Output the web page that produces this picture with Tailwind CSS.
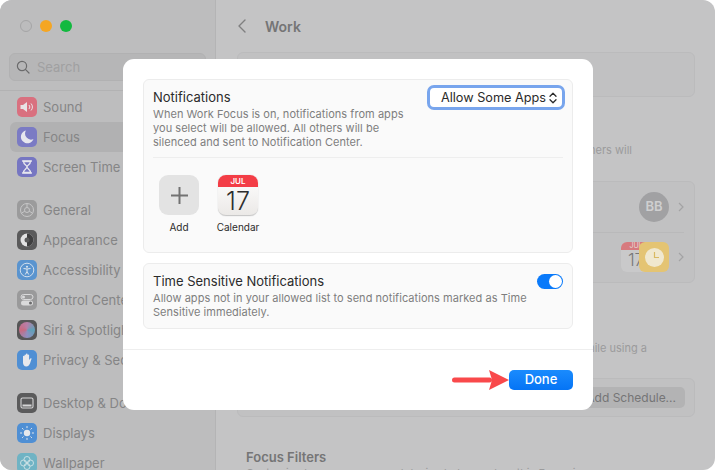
<!DOCTYPE html>
<html>
  <head>
    <meta charset="utf-8">
    <script src="https://cdn.jsdelivr.net/npm/@tailwindcss/browser@4"></script>
    <title>Work Focus</title>
  </head>
  <body class="bg-white font-['Inter','Liberation_Sans',sans-serif] overflow-hidden">
    <div class="relative flex w-[715px] h-[470px] rounded-[12px] overflow-hidden bg-[#c4c4c5]">

      <!-- sidebar -->
      <aside class="w-[216px] h-full shrink-0 bg-[#bdbdbe] border-r border-[#b4b4b5] overflow-hidden">
        <div class="flex gap-2 pl-[20px] pt-[20px] h-[53px]">
          <span class="w-3 h-3 rounded-full border border-[#a5a5a6] bg-[#bcbcbd]"></span>
          <span class="w-3 h-3 rounded-full bg-[#f5a623]"></span>
          <span class="w-3 h-3 rounded-full bg-[#12b93f]"></span>
        </div>
        <div class="mx-[9px] h-[28px] rounded-[6px] bg-[#b6b6b7] border border-[#b1b1b2] flex items-center pl-[6px] gap-[7px]">
          <svg class="w-[14px] h-[14px]" viewBox="0 0 14 14" fill="none" stroke="#6b6b6c" stroke-width="1.2"><circle cx="6" cy="6" r="4.6"/><path d="M9.4 9.4 13 13" stroke-linecap="round"/></svg>
          <span class="text-[13px] text-[#a0a0a1] pt-px">Search</span>
        </div>
        <div class="mt-[9px] h-px bg-[#b2b2b3]"></div>
        <nav class="mt-px text-[13px] text-[#858586] whitespace-nowrap [&>div>span:last-child]:pt-px">
          <div class="flex items-center h-[30px] pl-[17px] gap-[6px]">
            <span class="w-5 h-5 rounded-[5px] bg-[#d9707f] flex items-center justify-center">
              <svg class="w-4 h-4" viewBox="0 0 16 16" fill="none"><path d="M1.5 6h2.5l4-3v10l-4-3H1.5z" fill="#e8e3e5"/><path d="M10 6a3 3 0 0 1 0 4M12 4.5a5 5 0 0 1 0 7" stroke="#e8e3e5" stroke-width="1"/></svg>
            </span>
            <span>Sound</span>
          </div>
          <div class="flex items-center h-[30px] ml-[10px] pl-[7px] gap-[6px] rounded-l-[6px] bg-[#b1b1b2]">
            <span class="w-5 h-5 rounded-[5px] bg-[#7b7bc4] flex items-center justify-center">
              <svg class="w-4 h-4" viewBox="0 0 16 16"><path d="M7 1.5a6.5 6.5 0 1 0 7.5 8.6A6 6 0 0 1 7 1.5z" fill="#e6e6ee"/></svg>
            </span>
            <span>Focus</span>
          </div>
          <div class="flex items-center h-[30px] pl-[17px] gap-[6px]">
            <span class="w-5 h-5 rounded-[5px] bg-[#7676c2] flex items-center justify-center">
              <svg class="w-4 h-4" viewBox="0 0 16 16" fill="none" stroke="#e6e6ee" stroke-width="1.3"><path d="M3.5 2h9M3.5 14h9" stroke-linecap="round"/><path d="M4.5 2.5c0 3 3.5 3.8 3.5 5.5s-3.5 2.5-3.5 5.5h7c0-3-3.500-3.800-3.500-5.500s3.500-2.500 3.500-5.500z"/></svg>
            </span>
            <span>Screen Time</span>
          </div>

          <div class="h-[13px]"></div>

          <div class="flex items-center h-[30px] pl-[17px] gap-[6px]">
            <span class="w-5 h-5 rounded-[5px] bg-[#9b9b9c] flex items-center justify-center">
              <svg class="w-4 h-4" viewBox="0 0 16 16" fill="none" stroke="#c6c6c7" stroke-width="1"><circle cx="8" cy="8" r="6.500"/><circle cx="8" cy="8" r="2.500"/><path d="M8 1.500v4M2.400 11.200l3.400-2M13.600 11.200l-3.400-2"/></svg>
            </span>
            <span>General</span>
          </div>
          <div class="flex items-center h-[30px] pl-[17px] gap-[6px]">
            <span class="w-5 h-5 rounded-[5px] bg-[#5a5a5b] flex items-center justify-center">
              <svg class="w-4 h-4" viewBox="0 0 16 16"><circle cx="8" cy="8" r="6.500" fill="#e2e2e3"/><path d="M8 1.500a6.500 6.500 0 0 1 0 13z" fill="#3f3f40"/><circle cx="8" cy="8" r="2.500" fill="#5a5a5b"/></svg>
            </span>
            <span>Appearance</span>
          </div>
          <div class="flex items-center h-[30px] pl-[17px] gap-[6px]">
            <span class="w-5 h-5 rounded-[5px] bg-[#5a94cf] flex items-center justify-center">
              <svg class="w-4 h-4" viewBox="0 0 16 16" fill="none" stroke="#dfe7ef"><circle cx="8" cy="8" r="6.800" stroke-width="0.900"/><circle cx="8" cy="4.700" r="1" fill="#dfe7ef" stroke="none"/><path d="M4.500 6.500 8 7l3.500-.5M8 7v2.500M8 9.500 6.300 12.500M8 9.500l1.700 3" stroke-width="1"/></svg>
            </span>
            <span>Accessibility</span>
          </div>
          <div class="flex items-center h-[30px] pl-[17px] gap-[6px]">
            <span class="w-5 h-5 rounded-[5px] bg-[#9a9a9b] flex items-center justify-center">
              <svg class="w-4 h-4" viewBox="0 0 16 16"><rect x="2" y="2.500" width="12" height="5" rx="2.500" fill="none" stroke="#dadadb"/><circle cx="4.500" cy="5" r="1.500" fill="#dadadb"/><rect x="2" y="8.500" width="12" height="5" rx="2.500" fill="#dadadb"/><circle cx="11.500" cy="11" r="1.500" fill="#6b6b6c"/></svg>
            </span>
            <span>Control Center</span>
          </div>
          <div class="flex items-center h-[30px] pl-[17px] gap-[6px]">
            <span class="w-5 h-5 rounded-[5px] bg-[#565657] flex items-center justify-center">
              <span class="w-4 h-4 rounded-full bg-[conic-gradient(#b77fa8,#5fa0b8,#8f8fc0,#c86a80,#b77fa8)]"></span>
            </span>
            <span>Siri &amp; Spotlight</span>
          </div>
          <div class="flex items-center h-[30px] pl-[17px] gap-[6px]">
            <span class="w-5 h-5 rounded-[5px] bg-[#4f8fd4] flex items-center justify-center">
              <svg class="w-4 h-4" viewBox="0 0 16 16" fill="#e6e8ec"><path d="M4 7V4.200a.800.800 0 0 1 1.500 0V3a.800.800 0 0 1 1.500 0V2.300a.800.800 0 0 1 1.600 0V3a.800.800 0 0 1 1.500 0v5l1.300-1.500c.7-.6 1.500.1 1 .8L11 11.500C10 13.500 9 14.500 7.500 14.500 5 14.500 4 12.800 4 10.500z"/></svg>
            </span>
            <span>Privacy &amp; Security</span>
          </div>

          <div class="h-[13px]"></div>

          <div class="flex items-center h-[30px] pl-[17px] gap-[6px]">
            <span class="w-5 h-5 rounded-[5px] bg-[#5b5b5c] flex items-center justify-center">
              <svg class="w-4 h-4" viewBox="0 0 16 16" fill="none"><rect x="2" y="3" width="12" height="10" rx="1.500" stroke="#d5d5d6" stroke-width="1.100"/><rect x="3.500" y="9.500" width="9" height="2" fill="#d5d5d6"/></svg>
            </span>
            <span>Desktop &amp; Dock</span>
          </div>
          <div class="flex items-center h-[30px] pl-[17px] gap-[6px]">
            <span class="w-5 h-5 rounded-[5px] bg-[#4f8fd4] flex items-center justify-center">
              <svg class="w-4 h-4" viewBox="0 0 16 16" fill="none" stroke="#e6e8ec" stroke-linecap="round"><circle cx="8" cy="8" r="3.200" fill="#e6e8ec" stroke="none"/><path d="M8 1.500v1.200M8 13.300v1.200M1.500 8h1.200M13.300 8h1.200M3.400 3.400l.8.8M11.800 11.800l.8.8M3.400 12.600l.8-.8M11.800 4.200l.8-.8"/></svg>
            </span>
            <span>Displays</span>
          </div>
          <div class="flex items-center h-[30px] pl-[17px] gap-[6px]">
            <span class="w-5 h-5 rounded-[5px] bg-[#6fb3c4] flex items-center justify-center">
              <svg class="w-4 h-4" viewBox="0 0 16 16" fill="none" stroke="#cfe3e6" stroke-width="0.900"><circle cx="8" cy="4.500" r="3"/><circle cx="8" cy="11.500" r="3"/><circle cx="4.500" cy="8" r="3"/><circle cx="11.500" cy="8" r="3"/></svg>
            </span>
            <span>Wallpaper</span>
          </div>
        </nav>
      </aside>

      <!-- main pane behind the sheet -->
      <main class="flex-1 min-w-0 pl-[21px] pr-[20px] text-[11px] text-[#9b9b9c] whitespace-nowrap">
        <header class="flex items-center h-[52px] pl-[1px] gap-[19px]">
          <svg class="w-[8px] h-[14px]" viewBox="0 0 8 14" fill="none" stroke="#7f7f80" stroke-width="1.400" stroke-linecap="round" stroke-linejoin="round"><path d="M7 1 1 7l6 6"/></svg>
          <h1 class="text-[14px] font-semibold text-[#757576]">Work</h1>
        </header>
        <div class="h-[45px] rounded-[6px] bg-[#c1c1c2] border border-[#bbbbbc]"></div>
        <div class="h-[84px] flex items-center justify-end pr-[63px] pt-[23px]">
          <p>Allow notifications from selected people and apps. All others will</p>
        </div>
        <div class="h-[102px] rounded-[6px] bg-[#c1c1c2] border border-[#bbbbbc] flex flex-col">
          <div class="h-[50px] flex items-center justify-end gap-[9px] pr-[10px]">
            <span class="w-[30px] h-[30px] rounded-full bg-[#a1a1a3] text-[#cfcfd0] text-[13px] font-semibold flex items-center justify-center">BB</span>
            <svg class="w-[6px] h-[10px]" viewBox="0 0 6 10" fill="none" stroke="#a3a3a4" stroke-width="1.200"><path d="m1 1 4 4-4 4"/></svg>
          </div>
          <div class="h-px bg-[#b9b9ba] ml-[10px] mr-[10px]"></div>
          <div class="h-[50px] flex items-center justify-end gap-[9px] pr-[10px]">
            <span class="relative w-[48px] h-[30px]">
              <span class="absolute left-0 top-0 w-[30px] h-[30px] rounded-[6px] bg-[#c9c9ca] overflow-hidden text-center">
                <span class="block h-[8px] bg-[#d77a7e] text-[7px] leading-[8px] text-[#e3d5d5]">JUL</span>
                <span class="block text-[17px] leading-[21px] font-light text-[#777778]">17</span>
              </span>
              <span class="absolute right-0 top-0 w-[30px] h-[30px] rounded-[6px] bg-[#e4c473] flex items-center justify-center">
                <svg class="w-[19px] h-[19px]" viewBox="0 0 19 19"><circle cx="9.500" cy="9.500" r="9.500" fill="#f0e8cf"/><path d="M9.500 4v5.500H14" fill="none" stroke="#d9b962" stroke-width="1.200"/></svg>
              </span>
            </span>
            <svg class="w-[6px] h-[10px]" viewBox="0 0 6 10" fill="none" stroke="#a3a3a4" stroke-width="1.200"><path d="m1 1 4 4-4 4"/></svg>
          </div>
        </div>
        <div class="h-[95px] flex items-center justify-end pr-[48px] pt-[36px]">
          <p>Set a schedule to turn Work Focus on automatically while using a</p>
        </div>
        <div class="h-[39px] rounded-[6px] bg-[#c1c1c2] border border-[#bbbbbc] flex items-center justify-end pr-[9px]">
          <span class="h-[21px] w-[140px] rounded-[5px] bg-[#b3b3b4] text-[12px] text-[#757576] flex items-center justify-end pr-[9px]">Add Schedule...</span>
        </div>
        <h2 class="mt-[32px] pl-[9px] text-[13px] leading-[16px] font-semibold text-[#757576]">Focus Filters</h2>
        <p class="pl-[9px] leading-[14px] mt-[1px]">Customize how your apps and device behave when this Focus is on.</p>
      </main>

      <!-- sheet -->
      <section class="absolute left-[123px] top-[59px] w-[470px] h-[351px] rounded-[11px] bg-white flex flex-col">
        <div class="flex-1 px-[20px] pt-[20px]">
          <div class="h-[174px] rounded-[6px] bg-[#fafafa] border border-[#ececec] px-[9px] pt-[8px]">
            <div class="relative">
              <h3 class="text-[13px] leading-[19px] text-[#2b2b2b]">Notifications</h3>
              <p class="w-[262px] text-[11px] leading-[14px] tracking-[0.04px] text-[#7e7e7e]">When Work Focus is on, notifications from apps you select will be allowed. All others will be silenced and sent to Notification Center.</p>
              <div class="absolute -right-[2px] -top-[3px] w-[138px] h-[25px] rounded-[7px] bg-white border-[3px] border-[#78a5ed] flex items-center justify-end pr-[5px] gap-[3px] text-[12.7px] text-[#2b2b2b]">
                <span>Allow Some Apps</span>
                <svg class="w-[8px] h-[12px]" viewBox="0 0 8 12" fill="none" stroke="#2b2b2b" stroke-width="1.300" stroke-linecap="round" stroke-linejoin="round"><path d="M1 4.300 4 1.300l3 3M1 7.700l3 3 3-3"/></svg>
              </div>
            </div>
            <div class="h-px bg-[#eeeeee] mt-[8px]"></div>
            <div class="flex gap-[19px] mt-[17px] pl-[6px] text-[10px] text-[#2b2b2b]">
              <div class="w-[40px] flex flex-col items-center">
                <span class="w-[40px] h-[40px] rounded-[9px] bg-[#e3e3e3] flex items-center justify-center">
                  <svg class="w-[17px] h-[17px]" viewBox="0 0 17 17" stroke="#727272" stroke-width="2"><path d="M8.500 0v17M0 8.500h17"/></svg>
                </span>
                <span class="mt-[5px] leading-[14px]">Add</span>
              </div>
              <div class="w-[40px] flex flex-col items-center">
                <span class="w-[40px] h-[41px] rounded-[8px] bg-linear-to-b from-white to-[#ebe9e7] border-b border-[#c9c9c9] shadow-[0_0_1px_#b5b5b5] overflow-hidden flex flex-col items-center">
                  <span class="w-full h-[12px] bg-[#f33d46] text-white text-[8px] leading-[12px] font-semibold text-center">JUL</span>
                  <span class="text-[25px] leading-[28px] font-light text-[#2e2e2e]">17</span>
                </span>
                <span class="mt-[4px] leading-[14px] whitespace-nowrap">Calendar</span>
              </div>
            </div>
          </div>
          <div class="h-[66px] mt-[10px] rounded-[6px] bg-[#fafafa] border border-[#ececec] pl-[9px] pt-[8px] relative">
            <h3 class="text-[13px] leading-[19px] text-[#2b2b2b]">Time Sensitive Notifications</h3>
            <p class="w-[400px] text-[11px] leading-[14px] tracking-[0.04px] text-[#7e7e7e]">Allow apps not in your allowed list to send notifications marked as Time Sensitive immediately.</p>
            <span class="absolute right-[9px] top-[10px] w-[26px] h-[15px] rounded-full bg-[#0a7afa] flex justify-end items-center pr-px">
              <span class="w-[13px] h-[13px] rounded-full bg-white"></span>
            </span>
          </div>
        </div>
        <div class="h-[61px] border-t border-[#eeeeee] flex items-center justify-end pr-[20px]">
          <svg class="w-[57px] h-[20px]" viewBox="0 0 57 20" fill="#f9494b"><rect x="0" y="7.500" width="40" height="5" rx="2.500"/><path d="M37 0 57 10 37 20 40 10z"/></svg>
          <button class="w-[64px] h-[20px] rounded-[5px] bg-linear-to-b from-[#1a8bfd] to-[#0574f5] text-white text-[13px] font-medium leading-[18px] pb-[2px]">Done</button>
        </div>
      </section>
    </div>
  </body>
</html>
